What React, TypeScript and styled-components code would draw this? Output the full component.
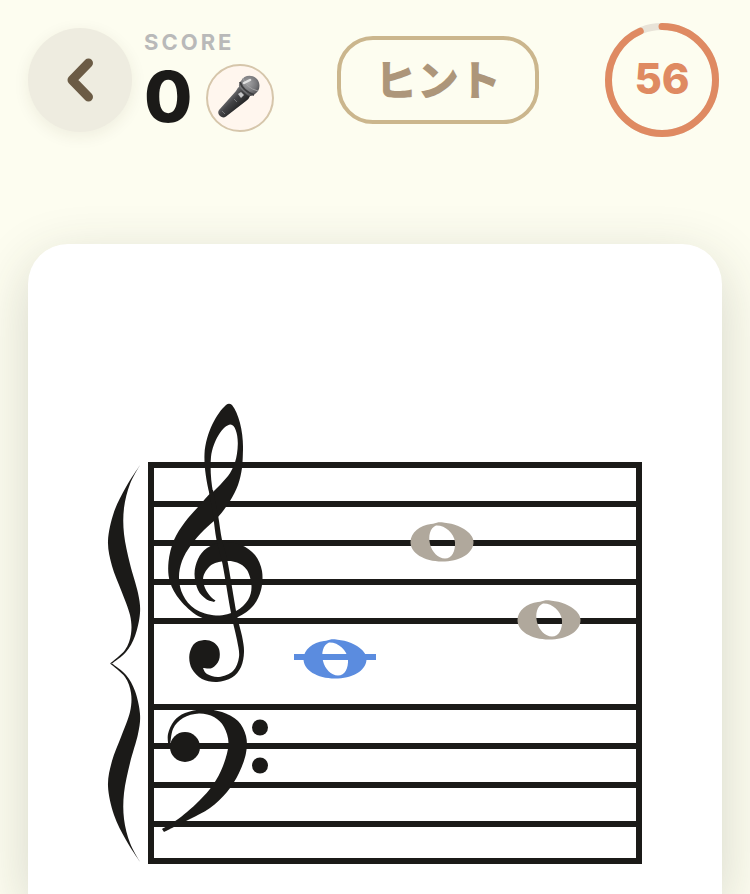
import React from "react";
import styled, { createGlobalStyle } from "styled-components";

const INK = "#1b1a18";
const MUTED = "#b0a89c";
const BLUE = "#5b8cdf";

const GlobalStyle = createGlobalStyle`
  *, *::before, *::after { box-sizing: border-box; }
  body {
    margin: 0;
    background: #fdfdf0;
    font-family: Inter, "Noto Sans CJK JP", sans-serif;
    color: ${INK};
  }
`;

const Page = styled.div`
  min-height: 100vh;
  padding: 20px 28px 0;
  display: flex;
  flex-direction: column;
  gap: 104px;
  overflow: hidden;
`;

const Header = styled.header`
  display: flex;
  align-items: center;
  justify-content: space-between;
`;

const HeaderStart = styled.div`
  display: flex;
  align-items: center;
  gap: 12px;
`;

const RoundButton = styled.button<{ $size: number; $tone: "plain" | "outlined" }>`
  width: ${(p) => p.$size}px;
  height: ${(p) => p.$size}px;
  flex: none;
  padding: 0;
  display: grid;
  place-items: center;
  border-radius: 50%;
  cursor: pointer;
  border: ${(p) => (p.$tone === "outlined" ? "2px solid #d6c6ab" : "none")};
  background: ${(p) => (p.$tone === "outlined" ? "#fff6ee" : "#eeece0")};
  box-shadow: ${(p) => (p.$tone === "plain" ? "0 4px 16px rgba(60, 50, 20, 0.08)" : "none")};
`;

const ScoreBlock = styled.div`
  display: flex;
  flex-direction: column;
  gap: 8px;
`;

const ScoreLabel = styled.div`
  font-size: 22px;
  line-height: 28px;
  font-weight: 700;
  letter-spacing: 3px;
  color: #b9b9b9;
`;

const ScoreRow = styled.div`
  display: flex;
  align-items: center;
  gap: 16px;
`;

const ScoreValue = styled.div`
  width: 46px;
  font-size: 70px;
  line-height: 66px;
  padding-bottom: 2px;
  font-weight: 800;
`;

const HintButton = styled.button`
  height: 88px;
  padding: 0 34px 4px;
  border: 4px solid #cbb68d;
  border-radius: 36px;
  background: transparent;
  color: #ad967a;
  font: 900 42px/56px "Noto Sans CJK JP", sans-serif;
  cursor: pointer;
`;

const Timer = styled.div`
  width: 120px;
  height: 120px;
  display: grid;
  place-items: center;
  & > * { grid-area: 1 / 1; }
`;

const TimerValue = styled.span`
  font-size: 42px;
  line-height: 48px;
  padding-bottom: 2px;
  font-weight: 800;
  color: #df8a62;
`;

const Card = styled.main`
  flex: 1;
  border-radius: 40px 40px 0 0;
  background: #fff;
  box-shadow: 0 16px 56px rgba(50, 55, 40, 0.2);
`;

const Staff = styled.svg`
  display: block;
  width: 100%;
  height: auto;
`;

type Point = [number, number];

/** Continues a path through the points as a Catmull-Rom curve. */
const curve = (pts: Point[]) =>
  pts
    .slice(0, -1)
    .map((p, i) => {
      const before = pts[i - 1] ?? p;
      const next = pts[i + 1];
      const after = pts[i + 2] ?? next;
      const c1 = [p[0] + (next[0] - before[0]) / 6, p[1] + (next[1] - before[1]) / 6];
      const c2 = [next[0] - (after[0] - p[0]) / 6, next[1] - (after[1] - p[1]) / 6];
      return `C${c1.join(" ")} ${c2.join(" ")} ${next.join(" ")}`;
    })
    .join("");

/** Closed outline made of smooth pieces that meet at corners. */
const outline = (...pieces: Point[][]) =>
  pieces
    .map((piece, i) => `${i === 0 ? "M" : "L"}${piece[0].join(" ")}${curve(piece)}`)
    .join("") + "Z";

const trebleBody = outline(
  [[243, 450], [242, 468], [238, 485], [230, 501], [218, 517], [204, 530],
    [191, 545], [182, 561], [179, 578], [183, 595], [195, 609], [216, 615.5], [236, 611], [248, 600], [251.5, 586],
    [247, 570], [237, 562.5], [226, 561], [212, 564.5], [203.5, 576], [205, 588], [211, 597], [215.5, 600.5]],
  [[214, 602], [206, 599], [198, 590], [194.5, 574], [198, 559], [207, 548], [223, 542], [241, 545], [255, 555],
    [262, 571], [261, 590], [253, 606], [238, 617], [219, 621.5], [198, 616], [180, 600], [170, 582], [168.5, 562],
    [174, 540], [185, 522], [198, 507], [209.5, 494]]
);

const trebleTop =
  "L209.5 494C206 480 204 465 204.500 454C206 432 217 413 226 405C228 403.300 230 403.300 232 405C239 414 243.500 432 243 450Z";

const trebleEye =
  "M230.500 424.500C235 424.500 238 434 237.800 444C237.500 458 234 468 228 476C223 482 218 487 213 492C211 482 210 468 211 457C213 441 223 425 230.500 424.500Z";

const trebleStem = outline(
  [[209, 490], [213, 515], [216.5, 540], [222.5, 564], [231, 613], [237, 640], [239, 657], [233, 671],
    [219, 677], [207, 674], [203, 668]],
  [[203, 668], [212, 668], [219, 660], [219, 649], [213, 642], [204, 640], [194, 644], [189.3, 656], [192, 669],
    [202, 679], [217, 682], [232, 677.5], [241, 667], [244, 652], [242, 636], [236.5, 613], [227.5, 561], [222, 540],
    [218, 515], [213, 490]]
);

const bass = outline(
  [[168.5, 747], [168, 734], [174, 721], [185, 713], [203, 709.5], [222, 712], [238, 721], [246, 736], [246, 753],
    [239, 773], [227, 792], [210, 808], [190, 819], [176, 826], [164, 832]],
  [[162, 829], [176, 820.5], [187, 812], [200, 800], [213, 785], [223, 766], [228.5, 744], [224, 727], [214, 717],
    [199, 713.5], [183, 718], [173, 729], [170, 747]]
);

const braceHalf = outline(
  [[140, 465], [126, 487], [114, 512], [108, 541], [112, 566], [121, 590], [130, 615], [131, 634], [125, 650],
    [110, 663.5]],
  [[112, 663.5], [126, 652], [135, 636], [140, 613], [138, 593], [130, 564], [124, 534], [124, 508], [130, 484],
    [140, 465]]
);

const wholeNote =
  "M-3.5-19.8C2-20 15-18 22-13C28-9 31.5-5 31.5 0C31.5 12 17 19.5 0 19.5C-18 19.5-31.5 11-31.5 0C-31.5-9-22-17-11-18C-8-18.3-6-19-3.5-19.8Z" +
  "M-6-16.5C-12-14-14-6-12 2C-10 10-4 16.5 3 16.5C10 16.5 13.5 9 13 0C12-9 3-17-6-16.5Z";

const NOTES = [
  { x: 335, y: 659, color: BLUE, ledger: true },
  { x: 442, y: 542, color: MUTED, ledger: false },
  { x: 549, y: 620, color: MUTED, ledger: false },
];

const LINES = [465, 504, 543, 582, 621, 707, 746, 785, 824, 861];

const GrandStaff = () => (
  <Staff viewBox="28 244 694 650" role="img" aria-label="Grand staff">
    <g stroke={INK} strokeWidth="6">
      {LINES.map((y) => (
        <path key={y} d={`M148 ${y}H642`} />
      ))}
      <path d="M151 462V864M639 462V864" />
    </g>
    <g fill={INK}>
      <path d={braceHalf} />
      <path d={braceHalf} transform="matrix(1 0 0 -1 0 1327)" />
      <path d={trebleBody.replace("Z", trebleTop) + trebleEye} fillRule="evenodd" />
      <path d={trebleStem} />
      <path d={bass} />
      <circle cx="185" cy="747" r="15" />
      <circle cx="260" cy="727.5" r="8" />
      <circle cx="260" cy="765.5" r="8" />
    </g>
    {NOTES.map((n) => (
      <g key={n.x} transform={`translate(${n.x} ${n.y})`}>
        <path d={wholeNote} fill={n.color} fillRule="evenodd" />
        {n.ledger && <path d="M-41-2H41" stroke={n.color} strokeWidth="6" />}
      </g>
    ))}
  </Staff>
);

const ChevronIcon = () => (
  <svg width="40" height="52" viewBox="0 0 40 52" fill="none" aria-hidden="true">
    <path d="M28.500 9L12 26L28.500 43" stroke="#6b5b45" strokeWidth="9" strokeLinecap="round" strokeLinejoin="round" />
  </svg>
);

const MicIcon = () => (
  <svg width="64" height="64" viewBox="2 2 64 64" aria-hidden="true">
    <defs>
      <linearGradient id="handle" x1="22" y1="32" x2="34" y2="44" gradientUnits="userSpaceOnUse">
        <stop offset="0" stopColor="#77777a" />
        <stop offset="0.4" stopColor="#454548" />
        <stop offset="1" stopColor="#222224" />
      </linearGradient>
      <radialGradient id="head" cx="0.45" cy="0.35" r="0.7">
        <stop offset="0" stopColor="#a4a4a6" />
        <stop offset="0.6" stopColor="#77777a" />
        <stop offset="1" stopColor="#48484b" />
      </radialGradient>
    </defs>
    <path d="M34 22L44 32Q43 35 40 37L20 52.500Q17 54.500 14 52Q11 49 13 46L30 27Q31 24 34 22Z" fill="url(#handle)" />
    <path d="M35 17C38 11 46 10 51 15C55 20 54 27 49 30C46 32 43 33 41 31L34 24C32 22 33 19 35 17Z" fill="url(#head)" />
    <path d="M34 18Q37 27 48 31" stroke="#3e3e40" strokeWidth="2" fill="none" />
    <path d="M37 14Q40 24 52 27" stroke="#a3a3a5" strokeWidth="1" fill="none" />
    <path d="M38 19L44 16" stroke="#e2e2e2" strokeWidth="2.500" strokeLinecap="round" />
    <path d="M32 30L35 28L38 31L35 34Z" fill="#c5c5c7" />
    <path d="M28 35L31 38M16 47L19 50" stroke="#77777a" strokeWidth="1" />
  </svg>
);

const SECONDS_LEFT = 56;
const ROUND_SECONDS = 60;

const TimerRing = () => (
  <svg width="120" height="120" viewBox="0 0 120 120" fill="none" strokeWidth="7" aria-hidden="true">
    <circle cx="60" cy="60" r="53.500" stroke="#e8e3d8" />
    <circle
      cx="60"
      cy="60"
      r="53.500"
      stroke="#df8a62"
      strokeLinecap="round"
      pathLength={ROUND_SECONDS}
      strokeDasharray={`${SECONDS_LEFT} ${ROUND_SECONDS}`}
      transform="rotate(-90 60 60)"
    />
  </svg>
);

export default function App() {
  return (
    <>
      <GlobalStyle />
      <Page>
        <Header>
          <HeaderStart>
            <RoundButton type="button" $size={104} $tone="plain" aria-label="戻る">
              <ChevronIcon />
            </RoundButton>
            <ScoreBlock>
              <ScoreLabel>SCORE</ScoreLabel>
              <ScoreRow>
                <ScoreValue>0</ScoreValue>
                <RoundButton type="button" $size={68} $tone="outlined" aria-label="マイク">
                  <MicIcon />
                </RoundButton>
              </ScoreRow>
            </ScoreBlock>
          </HeaderStart>
          <HintButton type="button">ヒント</HintButton>
          <Timer role="timer">
            <TimerRing />
            <TimerValue>{SECONDS_LEFT}</TimerValue>
          </Timer>
        </Header>
        <Card>
          <GrandStaff />
        </Card>
      </Page>
    </>
  );
}
